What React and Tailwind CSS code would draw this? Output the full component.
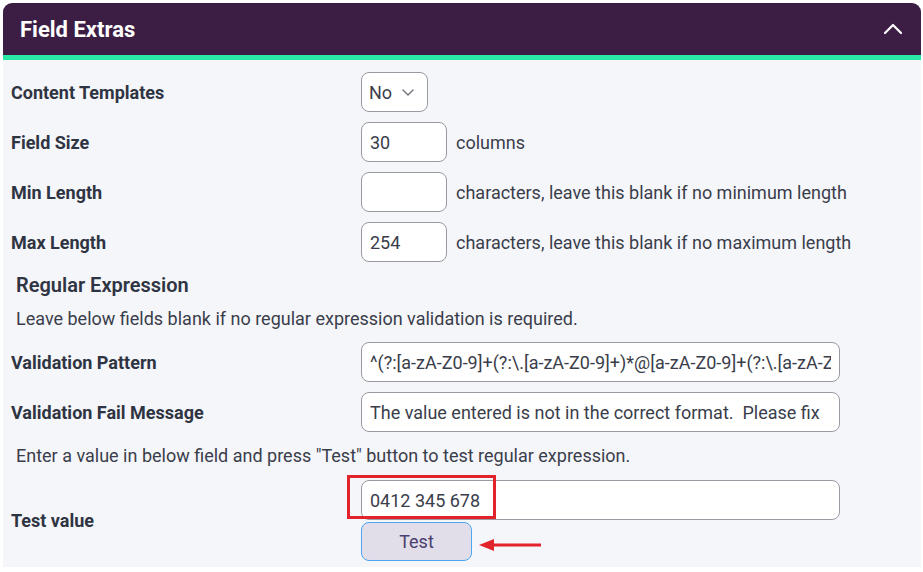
import React from "react";

function Row({ label, children }) {
  return (
    <div className="flex items-center h-[40px] mt-[10px]">
      <div className="w-[358px] pl-[8px] text-[18px] font-bold text-[#2f3443]">{label}</div>
      <div className="flex items-center">{children}</div>
    </div>
  );
}

const inputCls =
  "h-[40px] rounded-[8px] border border-[#9a9aa2] bg-white px-[8px] text-[18px] text-[#3a3d4a] outline-none";

export default function App() {
  return (
    <div className="min-h-[572px] bg-white" style={{ fontFamily: "Roboto, 'Noto Sans', sans-serif" }}>
      <div className="ml-[3px] mt-[3px] w-[918px] pb-[6px] bg-[#f5f6fa] rounded-t-[9px]">
        <div className="h-[52px] bg-[#3c1e45] rounded-t-[9px] flex items-center justify-between pl-[17px] pr-[18px]">
          <span className="text-white text-[22px] font-bold">Field Extras</span>
          <svg width="20" height="12" viewBox="0 0 20 12" fill="none">
            <path d="M2 10 L10 2 L18 10" stroke="white" strokeWidth="2.2" strokeLinecap="round" strokeLinejoin="round" />
          </svg>
        </div>
        <div className="h-[5px] bg-[#2ae8a6]" />
        <div className="pt-[2px]">
          <Row label="Content Templates">
            <div className="h-[40px] w-[67px] rounded-[8px] border border-[#9a9aa2] bg-white flex items-center pl-[7px] gap-[10px] text-[18px] text-[#3a3d4a]">
              <span>No</span>
              <svg width="12" height="7" viewBox="0 0 12 7" fill="none">
                <path d="M1 1 L6 6 L11 1" stroke="#6b6b73" strokeWidth="1.3" strokeLinecap="round" strokeLinejoin="round" />
              </svg>
            </div>
          </Row>
          <Row label="Field Size">
            <input className={`${inputCls} w-[86px]`} defaultValue="30" />
            <span className="ml-[9px] text-[18px] text-[#3a3d4a]">columns</span>
          </Row>
          <Row label="Min Length">
            <input className={`${inputCls} w-[86px]`} defaultValue="" />
            <span className="ml-[9px] text-[18px] text-[#3a3d4a]">characters, leave this blank if no minimum length</span>
          </Row>
          <Row label="Max Length">
            <input className={`${inputCls} w-[86px]`} defaultValue="254" />
            <span className="ml-[9px] text-[18px] text-[#3a3d4a]">characters, leave this blank if no maximum length</span>
          </Row>
          <div className="mt-[11px] pl-[13px] h-[24px] leading-[24px] text-[20px] font-semibold text-[#2f3443]">Regular Expression</div>
          <div className="mt-[12px] pl-[13px] h-[20px] leading-[20px] text-[18px] text-[#3a3d4a]">Leave below fields blank if no regular expression validation is required.</div>
          <div className="h-[3px]" />
          <Row label="Validation Pattern">
            <input className={`${inputCls} w-[479px]`} defaultValue="^(?:[a-zA-Z0-9]+(?:\.[a-zA-Z0-9]+)*@[a-zA-Z0-9]+(?:\.[a-zA-Z0-9]+)*\.[a-zA-Z]{2,})$" />
          </Row>
          <Row label="Validation Fail Message">
            <input className={`${inputCls} w-[479px]`} defaultValue="The value entered is not in the correct format.  Please fix" />
          </Row>
          <div className="mt-[14px] pl-[13px] h-[20px] leading-[20px] text-[18px] text-[#3a3d4a]">Enter a value in below field and press "Test" button to test regular expression.</div>
          <div className="flex items-center mt-[14px]">
            <div className="w-[358px] pl-[8px] text-[18px] font-bold text-[#2f3443]">Test value</div>
            <div className="flex flex-col">
              <div className="relative">
                <input className={`${inputCls} w-[479px]`} defaultValue="0412 345 678" />
                <div className="absolute left-[-14px] top-[-5px] w-[149px] h-[44px] border-[3px] border-[#e3232b] pointer-events-none" />
              </div>
              <div className="relative mt-[2px] h-[39px]">
                <button className="h-[39px] w-[111px] rounded-[8px] border-[1.5px] border-[#4ea6f0] bg-[#e1dee9] text-[18px] text-[#4a3f6e]">Test</button>
                <svg className="absolute left-[117px] top-[16px]" width="64" height="14" viewBox="0 0 64 14" fill="none">
                  <path d="M14 7 L63 7" stroke="#e3232b" strokeWidth="3" />
                  <path d="M1 7 L16 1 L16 13 Z" fill="#e3232b" />
                </svg>
              </div>
            </div>
          </div>
        </div>
      </div>
    </div>
  );
}
